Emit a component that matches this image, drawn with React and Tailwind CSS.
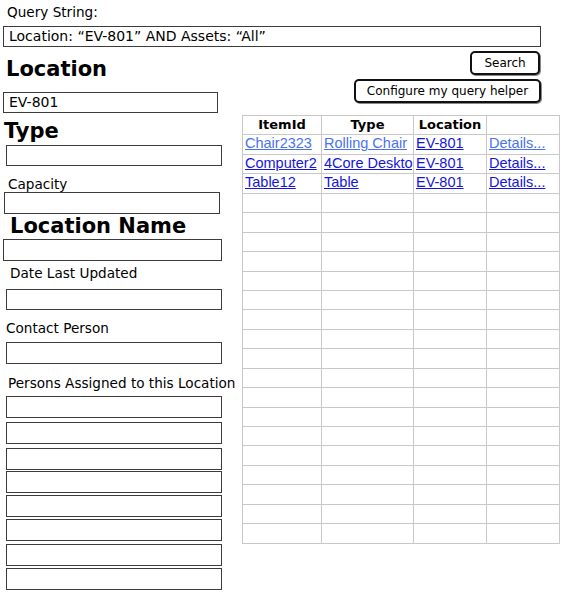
import React from 'react';

const rows = [
  [
    { text: 'Chair2323', tone: 'light' },
    { text: 'Rolling Chair', tone: 'light' },
    { text: 'EV-801', tone: 'dark' },
    { text: 'Details...', tone: 'light' },
  ],
  [
    { text: 'Computer2', tone: 'dark' },
    { text: '4Core Desktop', tone: 'dark' },
    { text: 'EV-801', tone: 'dark' },
    { text: 'Details...', tone: 'dark' },
  ],
  [
    { text: 'Table12', tone: 'dark' },
    { text: 'Table', tone: 'dark' },
    { text: 'EV-801', tone: 'dark' },
    { text: 'Details...', tone: 'dark' },
  ],
];

const EMPTY_ROWS = 18;

const Field = ({ className = '', children }) => (
  <div className={`border border-[#3c3c3c] bg-white flex items-center leading-[15px] pl-[5px] ${className}`}>
    {children}
  </div>
);

const Label = ({ className = '', children }) => (
  <div className={`text-[13.6px] leading-[15px] whitespace-nowrap ${className}`}>{children}</div>
);

const Button = ({ className = '', children }) => (
  <button className={`self-end h-[24px] border-2 border-[#111] rounded-[5px] bg-white text-[12px] leading-[14px] text-black shadow-[1px_1px_0_#888] flex items-center justify-center ${className}`}>
    {children}
  </button>
);

const Cell = ({ children, className = '' }) => (
  <div className={`border-r border-b border-[#c8c8c8] overflow-hidden whitespace-nowrap ${className}`}>
    {children}
  </div>
);

const App = () => {
  return (
    <div className="w-[565px] h-[596px] bg-white text-black text-[14px] font-['DejaVu_Sans',sans-serif] overflow-hidden">
      {/* Query string */}
      <Label className="pt-[5px] pl-[7px]">Query String:</Label>
      <Field className="mt-[6px] ml-[3px] w-[538px] h-[21px]">
        Location: “EV-801” AND Assets: “All”
      </Field>

      <div className="flex">
        {/* Left form */}
        <div className="w-[242px] flex flex-col items-start">
          <h1 className="mt-[10px] ml-[6px] text-[21px] leading-[24px] font-bold">Location</h1>
          <Field className="mt-[11px] ml-[3px] w-[215px] h-[21px]">EV-801</Field>

          <h2 className="mt-[6px] ml-[4px] text-[21px] leading-[24px] font-bold">Type</h2>
          <Field className="mt-[2px] ml-[6px] w-[216px] h-[21px]" />

          <Label className="mt-[11px] ml-[8px]">Capacity</Label>
          <Field className="ml-[4px] w-[216px] h-[22px]" />

          <h2 className="ml-[10px] text-[21px] leading-[24px] font-bold">Location Name</h2>
          <Field className="mt-[1px] ml-[3px] w-[219px] h-[22px]" />

          <Label className="mt-[5px] ml-[10px]">Date Last Updated</Label>
          <Field className="mt-[8px] ml-[6px] w-[216px] h-[21px]" />

          <Label className="mt-[11px] ml-[6px]">Contact Person</Label>
          <Field className="mt-[6px] ml-[6px] w-[216px] h-[22px]" />

          <Label className="mt-[12px] ml-[8px]">Persons Assigned to this Location</Label>
          <Field className="mt-[5px] ml-[6px] w-[216px] h-[22px]" />
          <Field className="mt-[4px] ml-[6px] w-[216px] h-[22px]" />
          <Field className="mt-[4px] ml-[6px] w-[216px] h-[22px]" />
          <Field className="mt-[1px] ml-[6px] w-[216px] h-[22px]" />
          <Field className="mt-[2px] ml-[6px] w-[216px] h-[22px]" />
          <Field className="mt-[2px] ml-[6px] w-[216px] h-[22px]" />
          <Field className="mt-[3px] ml-[6px] w-[216px] h-[22px]" />
          <Field className="mt-[2px] ml-[6px] w-[216px] h-[22px]" />
        </div>

        {/* Right side: buttons + results */}
        <div className="w-[318px] flex flex-col">
          <Button className="mt-[4px] mr-[20px] w-[70px]">Search</Button>
          <Button className="mt-[4px] mr-[19px] w-[187px]">Configure my query helper</Button>

          <div className="mt-[12px] grid grid-cols-[79px_92px_73px_73px] auto-rows-[19.45px] border-l border-t border-[#c8c8c8] font-['Liberation_Sans',sans-serif] w-max">
            {['ItemId', 'Type', 'Location', ''].map((h, i) => (
              <Cell key={i} className="text-center font-bold text-[13px] leading-[15px] pt-[1px] font-['DejaVu_Sans',sans-serif]">
                {h}
              </Cell>
            ))}
            {rows.map((row, r) =>
              row.map((c, i) => (
                <Cell key={`${r}-${i}`} className="pl-[2px] text-[14.5px] leading-[17px]">
                  <a
                    href="#"
                    className={`underline ${c.tone === 'light' ? 'text-[#4a72f0]' : 'text-[#1515e0]'}`}
                  >
                    {c.text}
                  </a>
                </Cell>
              ))
            )}
            {Array.from({ length: EMPTY_ROWS * 4 }).map((_, i) => (
              <Cell key={`e-${i}`} />
            ))}
          </div>
        </div>
      </div>
    </div>
  );
};

export default App;
